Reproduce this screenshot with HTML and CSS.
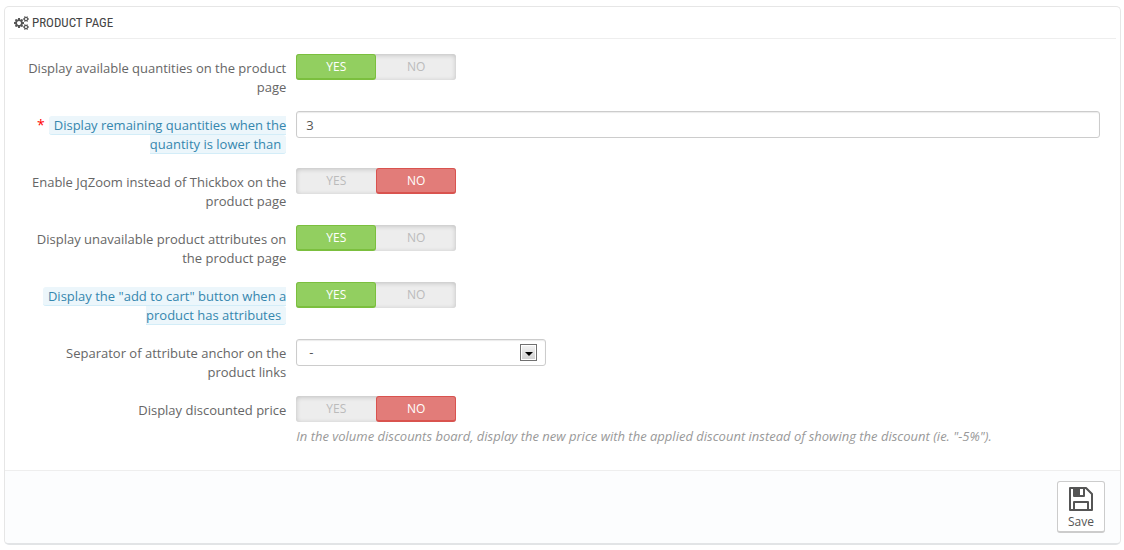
FILE: index.html
```html
<!DOCTYPE html>
<html lang="en">
<head>
	<meta charset="utf-8">
	<title>Product page</title>
	<link rel="stylesheet" href="styles.css">
</head>
<body>
	<form class="panel">
		<h3 class="panel-heading">
			<svg class="icon-cogs" viewBox="0 0 1920 1792" aria-hidden="true">
				<path d="M896 896q0-106-75-181t-181-75-181 75-75 181 75 181 181 75 181-75 75-181zm768 512q0-52-38-90t-90-38-90 38-38 90q0 53 37.500 90.500t90.500 37.500 90.500-37.500 37.500-90.500zm0-1024q0-52-38-90t-90-38-90 38-38 90q0 53 37.500 90.500t90.500 37.500 90.500-37.500 37.500-90.500zm-384 421v185q0 10-7 19.500t-16 10.500l-155 24q-11 35-32 76 34 48 90 115 7 11 7 20 0 12-7 19-23 30-82.500 89.500t-78.500 59.500q-11 0-21-7l-115-90q-37 19-77 31-11 108-23 155-7 24-30 24h-186q-11 0-20-7.500t-10-17.500l-23-153q-34-10-75-31l-118 89q-7 7-20 7-11 0-21-8-144-133-144-160 0-9 7-19 10-14 41-53t47-61q-23-44-35-82l-152-24q-10-1-17-9.500t-7-19.500v-185q0-10 7-19.500t16-10.500l155-24q11-35 32-76-34-48-90-115-7-11-7-20 0-12 7-20 22-30 82-89t79-59q11 0 21 7l115 90q34-18 77-32 11-108 23-154 7-24 30-24h186q11 0 20 7.500t10 17.500l23 153q34 10 75 31l118-89q8-7 20-7 11 0 21 8 144 133 144 160 0 8-7 19-12 16-42 54t-45 60q23 48 34 82l152 23q10 2 17 10.500t7 19.500zm640 533v140q0 16-149 31-12 27-30 52 51 113 51 138 0 4-4 7-122 71-124 71-8 0-46-47t-52-68q-20 2-30 2t-30-2q-14 21-52 68t-46 47q-2 0-124-71-4-3-4-7 0-25 51-138-18-25-30-52-149-15-149-31v-140q0-16 149-31 13-29 30-52-51-113-51-138 0-4 4-7 4-2 35-20t59-34 30-16q8 0 46 46.500t52 67.500q20-2 30-2t30 2q51-71 92-112l6-2q4 0 124 70 4 3 4 7 0 25-51 138 17 23 30 52 149 15 149 31zm0-1024v140q0 16-149 31-12 27-30 52 51 113 51 138 0 4-4 7-122 71-124 71-8 0-46-47t-52-68q-20 2-30 2t-30-2q-14 21-52 68t-46 47q-2 0-124-71-4-3-4-7 0-25 51-138-18-25-30-52-149-15-149-31v-140q0-16 149-31 13-29 30-52-51-113-51-138 0-4 4-7 4-2 35-20t59-34 30-16q8 0 46 46.500t52 67.500q20-2 30-2t30 2q51-71 92-112l6-2q4 0 124 70 4 3 4 7 0 25-51 138 17 23 30 52 149 15 149 31z"/>
			</svg>
			PRODUCT PAGE
		</h3>

		<div class="form-wrapper">
			<div class="form-group">
				<span class="control-label" id="l-qties">Display available quantities on the product page</span>
				<div class="field">
					<div class="switch" role="radiogroup" aria-labelledby="l-qties">
						<input type="radio" name="display_qties" id="display_qties_on" checked>
						<label class="yes" for="display_qties_on">YES</label>
						<input type="radio" name="display_qties" id="display_qties_off">
						<label class="no" for="display_qties_off">NO</label>
					</div>
				</div>
			</div>

			<div class="form-group">
				<label class="control-label required" for="last_qties"><span class="label-tooltip">Display remaining quantities when the quantity is lower than</span></label>
				<div class="field">
					<input class="form-control" type="text" id="last_qties" name="last_qties" value="3">
				</div>
			</div>

			<div class="form-group">
				<span class="control-label" id="l-jqzoom">Enable JqZoom instead of Thickbox on the product page</span>
				<div class="field">
					<div class="switch" role="radiogroup" aria-labelledby="l-jqzoom">
						<input type="radio" name="jqzoom" id="jqzoom_on">
						<label class="yes" for="jqzoom_on">YES</label>
						<input type="radio" name="jqzoom" id="jqzoom_off" checked>
						<label class="no" for="jqzoom_off">NO</label>
					</div>
				</div>
			</div>

			<div class="form-group">
				<span class="control-label" id="l-unavailable">Display unavailable product attributes on the product page</span>
				<div class="field">
					<div class="switch" role="radiogroup" aria-labelledby="l-unavailable">
						<input type="radio" name="unavailable" id="unavailable_on" checked>
						<label class="yes" for="unavailable_on">YES</label>
						<input type="radio" name="unavailable" id="unavailable_off">
						<label class="no" for="unavailable_off">NO</label>
					</div>
				</div>
			</div>

			<div class="form-group">
				<span class="control-label" id="l-cart"><span class="label-tooltip">Display the "add to cart" button when a product has attributes</span></span>
				<div class="field">
					<div class="switch" role="radiogroup" aria-labelledby="l-cart">
						<input type="radio" name="cart" id="cart_on" checked>
						<label class="yes" for="cart_on">YES</label>
						<input type="radio" name="cart" id="cart_off">
						<label class="no" for="cart_off">NO</label>
					</div>
				</div>
			</div>

			<div class="form-group">
				<label class="control-label" for="separator">Separator of attribute anchor on the product links</label>
				<div class="field">
					<div class="select">
						<select class="form-control" id="separator" name="separator">
							<option>-</option>
							<option>,</option>
						</select>
						<svg class="arrow" viewBox="0 0 15 15" aria-hidden="true">
							<path d="M4 7h8L8 11z"/>
						</svg>
					</div>
				</div>
			</div>

			<div class="form-group">
				<span class="control-label" id="l-discount">Display discounted price</span>
				<div class="field">
					<div class="switch" role="radiogroup" aria-labelledby="l-discount">
						<input type="radio" name="discount" id="discount_on">
						<label class="yes" for="discount_on">YES</label>
						<input type="radio" name="discount" id="discount_off" checked>
						<label class="no" for="discount_off">NO</label>
					</div>
					<p class="help-block">In the volume discounts board, display the new price with the applied discount instead of showing the discount (ie. "-5%").</p>
				</div>
			</div>
		</div>

		<div class="panel-footer">
			<button type="submit" class="btn">
				<svg class="icon-save" viewBox="0 0 24 24" aria-hidden="true">
					<path d="M1 1h16l6 6v16H1z" fill="none" stroke="#555" stroke-width="2" stroke-linejoin="round"/>
					<path d="M5 1v8h10V1M5 23v-8h14v8" fill="none" stroke="#555" stroke-width="2" stroke-linejoin="round"/>
					<path d="M5 1h6v8H5z" fill="#555"/>
				</svg>
				Save
			</button>
		</div>
	</form>
</body>
</html>
```

FILE: styles.css
```css
* {
	box-sizing: border-box;
}

body {
	margin: 6px 3px 4px 4px;
	background: #fff;
	color: #666;
	font: 13px/19px "Open Sans", sans-serif;
}

.panel {
	border: 1px solid #e6e6e6;
	border-bottom: 2px solid #e2e4e6;
	border-radius: 5px;
	padding: 0 15px;
}

.panel-heading {
	display: flex;
	align-items: center;
	gap: 3px;
	height: 32px;
	margin: 0 -11px 15px;
	padding: 0 5px;
	border-bottom: 1px solid #eee;
	color: #444;
	font: 13px/19px "Ubuntu Condensed", "Roboto Condensed", "Open Sans Condensed", sans-serif;
}

.icon-cogs {
	width: 15px;
	height: 14px;
	fill: #555;
}

.form-group {
	display: flex;
	margin-bottom: 15px;
}

.control-label {
	width: 25%;
	padding: 5px 5px 0;
	margin-bottom: -1px;
	text-align: right;
}

.required::before {
	content: "*";
	margin-right: 4px;
	color: #f00;
	font-size: 14px;
	line-height: 1;
}

.label-tooltip {
	padding: 0 5px;
	border-bottom: 1px solid #d3edf8;
	border-radius: 3px;
	background: #ecf6fb;
	color: #3586ae;
}

.field {
	flex: 1;
	padding: 0 5px;
}

.form-control {
	display: block;
	width: 100%;
	height: 27px;
	padding: 0 9px;
	border: 1px solid #ccc;
	border-radius: 3px;
	background: #fff;
	box-shadow: inset 0 1px 1px rgba(0, 0, 0, 0.08);
	color: #555;
	font: inherit;
}

.switch {
	position: relative;
	display: flex;
	width: 160px;
	height: 26px;
	border-radius: 3px;
	background: #ededed;
	box-shadow: inset 0 1px 5px rgba(0, 0, 0, 0.2);
}

.switch input {
	position: absolute;
	opacity: 0;
	margin: 0;
}

.switch label {
	flex: 1;
	border: 1px solid transparent;
	border-radius: 3px;
	color: #bbb;
	font-size: 12px;
	line-height: 24px;
	text-align: center;
	cursor: pointer;
}

.switch input:checked + label {
	border-bottom-width: 2px;
	color: #fff;
}

.switch input:checked + .yes {
	border-color: #7bbf3e;
	background: #92cf60;
}

.switch input:checked + .no {
	border-color: #d9534f;
	background: #e27c79;
}

.select {
	position: relative;
	width: 250px;
}

.select select {
	appearance: none;
	padding: 0 12px;
}

/* drop button on top of the select */
.arrow {
	position: absolute;
	top: 5px;
	right: 9px;
	width: 17px;
	height: 17px;
	border: 1px solid #707070;
	background: linear-gradient(#f4f4f4, #d0d0d0);
	box-shadow: inset 0 0 0 1px #fff;
	pointer-events: none;
}

.help-block {
	margin: 5px 0 0;
	color: #999;
	font-style: italic;
}

.panel-footer {
	display: flex;
	justify-content: flex-end;
	margin: 24px -15px 0;
	padding: 10px 15px;
	border-top: 1px solid #eee;
	border-radius: 0 0 4px 4px;
	background: #fcfdfe;
}

.btn {
	display: flex;
	flex-direction: column;
	align-items: center;
	gap: 1px;
	width: 48px;
	padding: 5px 0 0;
	border: 1px solid #ccc;
	border-bottom-width: 2px;
	border-radius: 3px;
	background: #fff;
	color: #555;
	font: 12px/19px "Open Sans", sans-serif;
	cursor: pointer;
}

.icon-save {
	width: 24px;
	height: 24px;
}
```
